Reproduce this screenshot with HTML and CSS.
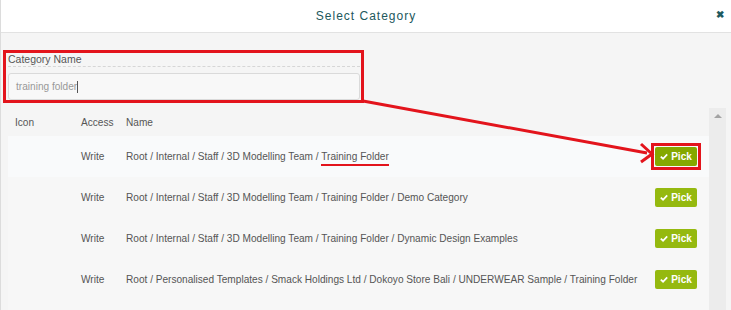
FILE: index.html
```html
<!DOCTYPE html>
<html lang="en">
<head>
    <meta charset="UTF-8">
    <title>Select Category</title>
    <link rel="stylesheet" href="styles.css">
</head>
<body>

    <div class="modal">
        <!-- Header -->
        <div class="modal-header">
            <span class="modal-title">Select Category</span>
            <button class="close-button">&#10006;</button>
        </div>

        <div class="modal-body">
            <!-- Search field -->
            <div class="field marked">
                <label class="field-label">Category Name</label>
                <div class="field-input">training folder<span class="caret"></span></div>
            </div>

            <!-- Results -->
            <div class="results">
                <div class="results-table">
                    <div class="row head">
                        <div class="col-icon">Icon</div>
                        <div class="col-access">Access</div>
                        <div class="col-name">Name</div>
                    </div>
                    <div class="row first">
                        <div class="col-icon"></div>
                        <div class="col-access">Write</div>
                        <div class="col-name">Root / Internal / Staff / 3D Modelling Team / <span class="underlined">Training Folder</span></div>
                        <div class="col-pick">
                            <span class="pick-box">
                                <button class="pick-button"><svg class="check" viewBox="0 0 10 8"><path d="M1 4.2 L3.8 6.8 L9 1.4" fill="none" stroke="#fff" stroke-width="2.2"/></svg>Pick</button>
                            </span>
                        </div>
                    </div>
                    <div class="row">
                        <div class="col-icon"></div>
                        <div class="col-access">Write</div>
                        <div class="col-name">Root / Internal / Staff / 3D Modelling Team / Training Folder / Demo Category</div>
                        <div class="col-pick"><button class="pick-button"><svg class="check" viewBox="0 0 10 8"><path d="M1 4.2 L3.8 6.8 L9 1.4" fill="none" stroke="#fff" stroke-width="2.2"/></svg>Pick</button></div>
                    </div>
                    <div class="row">
                        <div class="col-icon"></div>
                        <div class="col-access">Write</div>
                        <div class="col-name">Root / Internal / Staff / 3D Modelling Team / Training Folder / Dynamic Design Examples</div>
                        <div class="col-pick"><button class="pick-button"><svg class="check" viewBox="0 0 10 8"><path d="M1 4.2 L3.8 6.8 L9 1.4" fill="none" stroke="#fff" stroke-width="2.2"/></svg>Pick</button></div>
                    </div>
                    <div class="row">
                        <div class="col-icon"></div>
                        <div class="col-access">Write</div>
                        <div class="col-name">Root / Personalised Templates / Smack Holdings Ltd / Dokoyo Store Bali / UNDERWEAR Sample / Training Folder</div>
                        <div class="col-pick"><button class="pick-button"><svg class="check" viewBox="0 0 10 8"><path d="M1 4.2 L3.8 6.8 L9 1.4" fill="none" stroke="#fff" stroke-width="2.2"/></svg>Pick</button></div>
                    </div>
                    <div class="row"></div>
                </div>
                <div class="scrollbar">
                    <div class="scroll-up"></div>
                </div>
            </div>
        </div>

        <!-- Annotation arrow -->
        <svg class="arrow" width="731" height="310" viewBox="0 0 731 310">
            <line x1="362" y1="101" x2="646" y2="153" stroke="#e3141c" stroke-width="3"/>
            <path d="M640 144 L651 154 L640 162" fill="none" stroke="#e3141c" stroke-width="3"/>
        </svg>
    </div>

</body>
</html>
```

FILE: styles.css
```css
body {
    margin: 0;
    padding: 0;
    font-family: "Liberation Sans", Arial, sans-serif;
    background-color: #f5f5f5;
}

.modal {
    position: relative;
    width: 731px;
    height: 310px;
    overflow: hidden;
    border-left: 1px solid #dcdcdc;
    box-sizing: border-box;
    background-color: #f5f5f5;
}

.modal-header {
    height: 32px;
    background-color: #fff;
    border-bottom: 1px solid #e2e2e2;
    display: flex;
    align-items: center;
    justify-content: center;
    position: relative;
}

.modal-title {
    font-size: 12px;
    letter-spacing: 1px;
    color: #22585c;
}

.close-button {
    position: absolute;
    right: 7px;
    top: 9px;
    background: none;
    border: none;
    padding: 0;
    font-size: 10px;
    font-weight: bold;
    color: #1e5a60;
    cursor: pointer;
}

.modal-body {
    padding-top: 17px;
}

/* Search field */
.field {
    width: 352px;
    margin-left: 2px;
    padding: 0 1px 0 2px;
    border: 3px solid transparent;
}

.field.marked {
    border-color: #e3141c;
}

.field-label {
    display: block;
    font-size: 10.5px;
    line-height: 12px;
    color: #555;
    padding: 0 0 1px;
    border-bottom: 1px dashed #d6d6d6;
    margin-bottom: 6px;
}

.field-input {
    height: 25px;
    line-height: 26px;
    padding-left: 7px;
    border: 1px solid #dadada;
    border-radius: 3px;
    background-color: #f8f8f8;
    font-size: 10.1px;
    color: #999;
}

.caret {
    display: inline-block;
    width: 1px;
    height: 12px;
    background-color: #555;
    vertical-align: middle;
}

/* Results table */
.results {
    display: flex;
    margin-top: 5px;
    padding-left: 7px;
}

.results-table {
    width: 701px;
}

.row {
    display: flex;
    align-items: center;
    height: 41px;
    font-size: 10.1px;
    color: #555;
    background-color: #f7f7f7;
}

.row.head {
    height: 28px;
    background-color: #f5f5f5;
}

.row.first {
    background-color: #f9fafb;
}

.col-icon {
    width: 66px;
    padding-left: 7px;
}

.col-access {
    width: 45px;
}

.col-name {
    flex: 1;
}

.col-pick {
    width: 54px;
}

.underlined {
    border-bottom: 2px solid #e3141c;
    padding-bottom: 2px;
}

.pick-button {
    display: inline-flex;
    align-items: center;
    justify-content: center;
    gap: 3px;
    width: 42px;
    height: 19px;
    border: none;
    border-radius: 2px;
    background-color: #95b90f;
    color: #fff;
    font-family: "Liberation Sans", Arial, sans-serif;
    font-size: 10px;
    font-weight: bold;
    padding: 0;
    cursor: pointer;
}

.check {
    width: 8px;
    height: 7px;
}

.pick-box {
    display: inline-block;
    margin-left: -4px;
    border: 3px solid #e3141c;
    padding: 1px;
    line-height: 0;
}

.pick-box .pick-button {
    background-color: #85a800;
}

.scrollbar {
    width: 17px;
    height: 210px;
    background-color: #ececec;
}

.scroll-up {
    width: 0;
    height: 0;
    margin: 6px auto 0;
    border-left: 4px solid transparent;
    border-right: 4px solid transparent;
    border-bottom: 4px solid #a3a3a3;
}

/* Annotation overlay */
.arrow {
    position: absolute;
    top: 0;
    left: 0;
    pointer-events: none;
}
```
